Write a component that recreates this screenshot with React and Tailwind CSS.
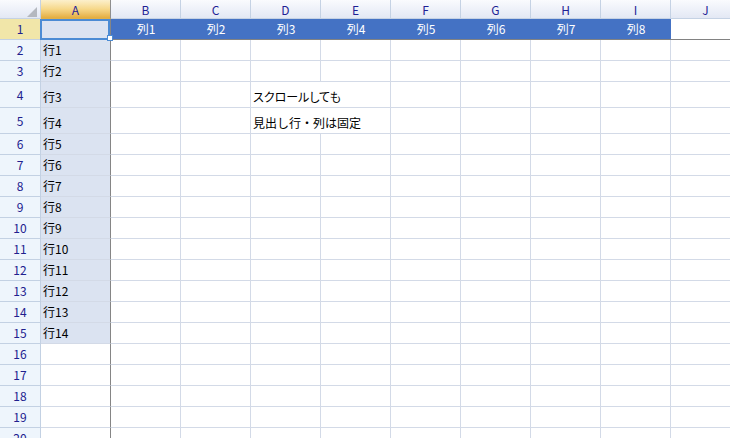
const COLS = ['A', 'B', 'C', 'D', 'E', 'F', 'G', 'H', 'I', 'J'];

const ROWS = Array.from({ length: 20 }, (_, i) => ({
	n: i + 1,
	tall: i === 3 || i === 4,
}));

const NOTES = {
	4: 'スクロールしても',
	5: '見出し行・列は固定',
};

function ColumnHeader() {
	return (
		<div className="flex h-[19px]">
			<div className="relative w-[41px] shrink-0 border-r border-b border-[#c5d2e4] bg-gradient-to-b from-[#fafbfe] to-[#e3e8f4]">
				<svg className="absolute left-[27px] top-[7px]" width="10" height="10" viewBox="0 0 10 10">
					<polygon points="10,0 10,10 0,10" fill="#b4b8bf" />
				</svg>
			</div>
			{COLS.map((c) => (
				<div
					key={c}
					className={
						c === 'A'
							? 'flex w-[70px] shrink-0 items-center justify-center border-r border-b border-r-[#8e8e8e] border-b-[#e0b04a] bg-gradient-to-b from-[#fcf0cb] via-[#f6d88a] to-[#e3ad3f] pt-[2px] text-[12px] text-[#1f1f95]'
							: 'flex w-[70px] shrink-0 items-center justify-center border-r border-b border-[#c5d2e4] bg-gradient-to-b from-[#fafbfe] to-[#e3e8f4] pt-[2px] text-[12px] text-[#1f1f95]'
					}
				>
					{c}
				</div>
			))}
		</div>
	);
}

function Row({ n, tall }) {
	const height = tall ? 'h-[26px]' : 'h-[21px]';
	const label = n >= 2 && n <= 15 ? `行${n - 1}` : '';
	const highlighted = n <= 15;

	return (
		<div className={`flex ${height}`}>
			<div
				className={
					n === 1
						? 'flex w-[41px] shrink-0 items-center justify-center border-r border-b border-[#c3d1e3] bg-[#f1e6a9] text-[12px] text-[#20208e]'
						: 'flex w-[41px] shrink-0 items-center justify-center border-r border-b border-[#c3d1e3] bg-[#eef5fc] text-[12px] text-[#20208e]'
				}
			>
				{n}
			</div>
			<div
				className={
					highlighted
						? 'flex w-[70px] shrink-0 items-end border-r border-b border-r-[#858585] border-b-[#d3dae7] bg-[#dbe3f1] pb-[2px] pl-[2px] text-[12px] leading-[16px] text-black'
						: 'flex w-[70px] shrink-0 items-end border-r border-b border-r-[#858585] border-b-[#d3dae7] bg-white pb-[2px] pl-[2px] text-[12px] leading-[16px] text-black'
				}
			>
				{label}
			</div>
			{COLS.slice(1).map((c, i) => {
				if (n === 1) {
					return c === 'J' ? (
						<div key={c} className="w-[70px] shrink-0 border-r border-b border-r-[#d3dae7] border-b-[#828282] bg-white" />
					) : (
						<div key={c} className="flex w-[70px] shrink-0 items-center justify-center border-b border-[#828282] bg-[#4472c4] text-[12px] text-white">
							列{i + 1}
						</div>
					);
				}
				const note = c === 'D' ? NOTES[n] : null;
				return (
					<div
						key={c}
						className={
							note
								? 'relative z-10 flex w-[70px] shrink-0 items-end whitespace-nowrap border-b border-[#d3dae7] pb-[2px] pl-[2px] text-[12px] leading-[16px] text-black'
								: 'w-[70px] shrink-0 border-r border-b border-[#d3dae7]'
						}
					>
						{note && <span className={n === 4 ? '[font-feature-settings:"palt"]' : ''}>{note}</span>}
					</div>
				);
			})}
		</div>
	);
}

export default function App() {
	return (
		<div className="relative h-[438px] w-[730px] overflow-hidden bg-white font-['Noto_Sans_CJK_JP','Noto_Sans',sans-serif]">
			<ColumnHeader />
			{ROWS.map((r) => (
				<Row key={r.n} {...r} />
			))}
			{/* active cell A1 with its fill handle */}
			<div className="pointer-events-none absolute left-[40px] top-[19px] h-[21px] w-[70px] border-2 border-[#4b8bd4]" />
			<div className="pointer-events-none absolute left-[107px] top-[35px] h-[6px] w-[6px] border border-[#4b8bd4] bg-white" />
		</div>
	);
}
